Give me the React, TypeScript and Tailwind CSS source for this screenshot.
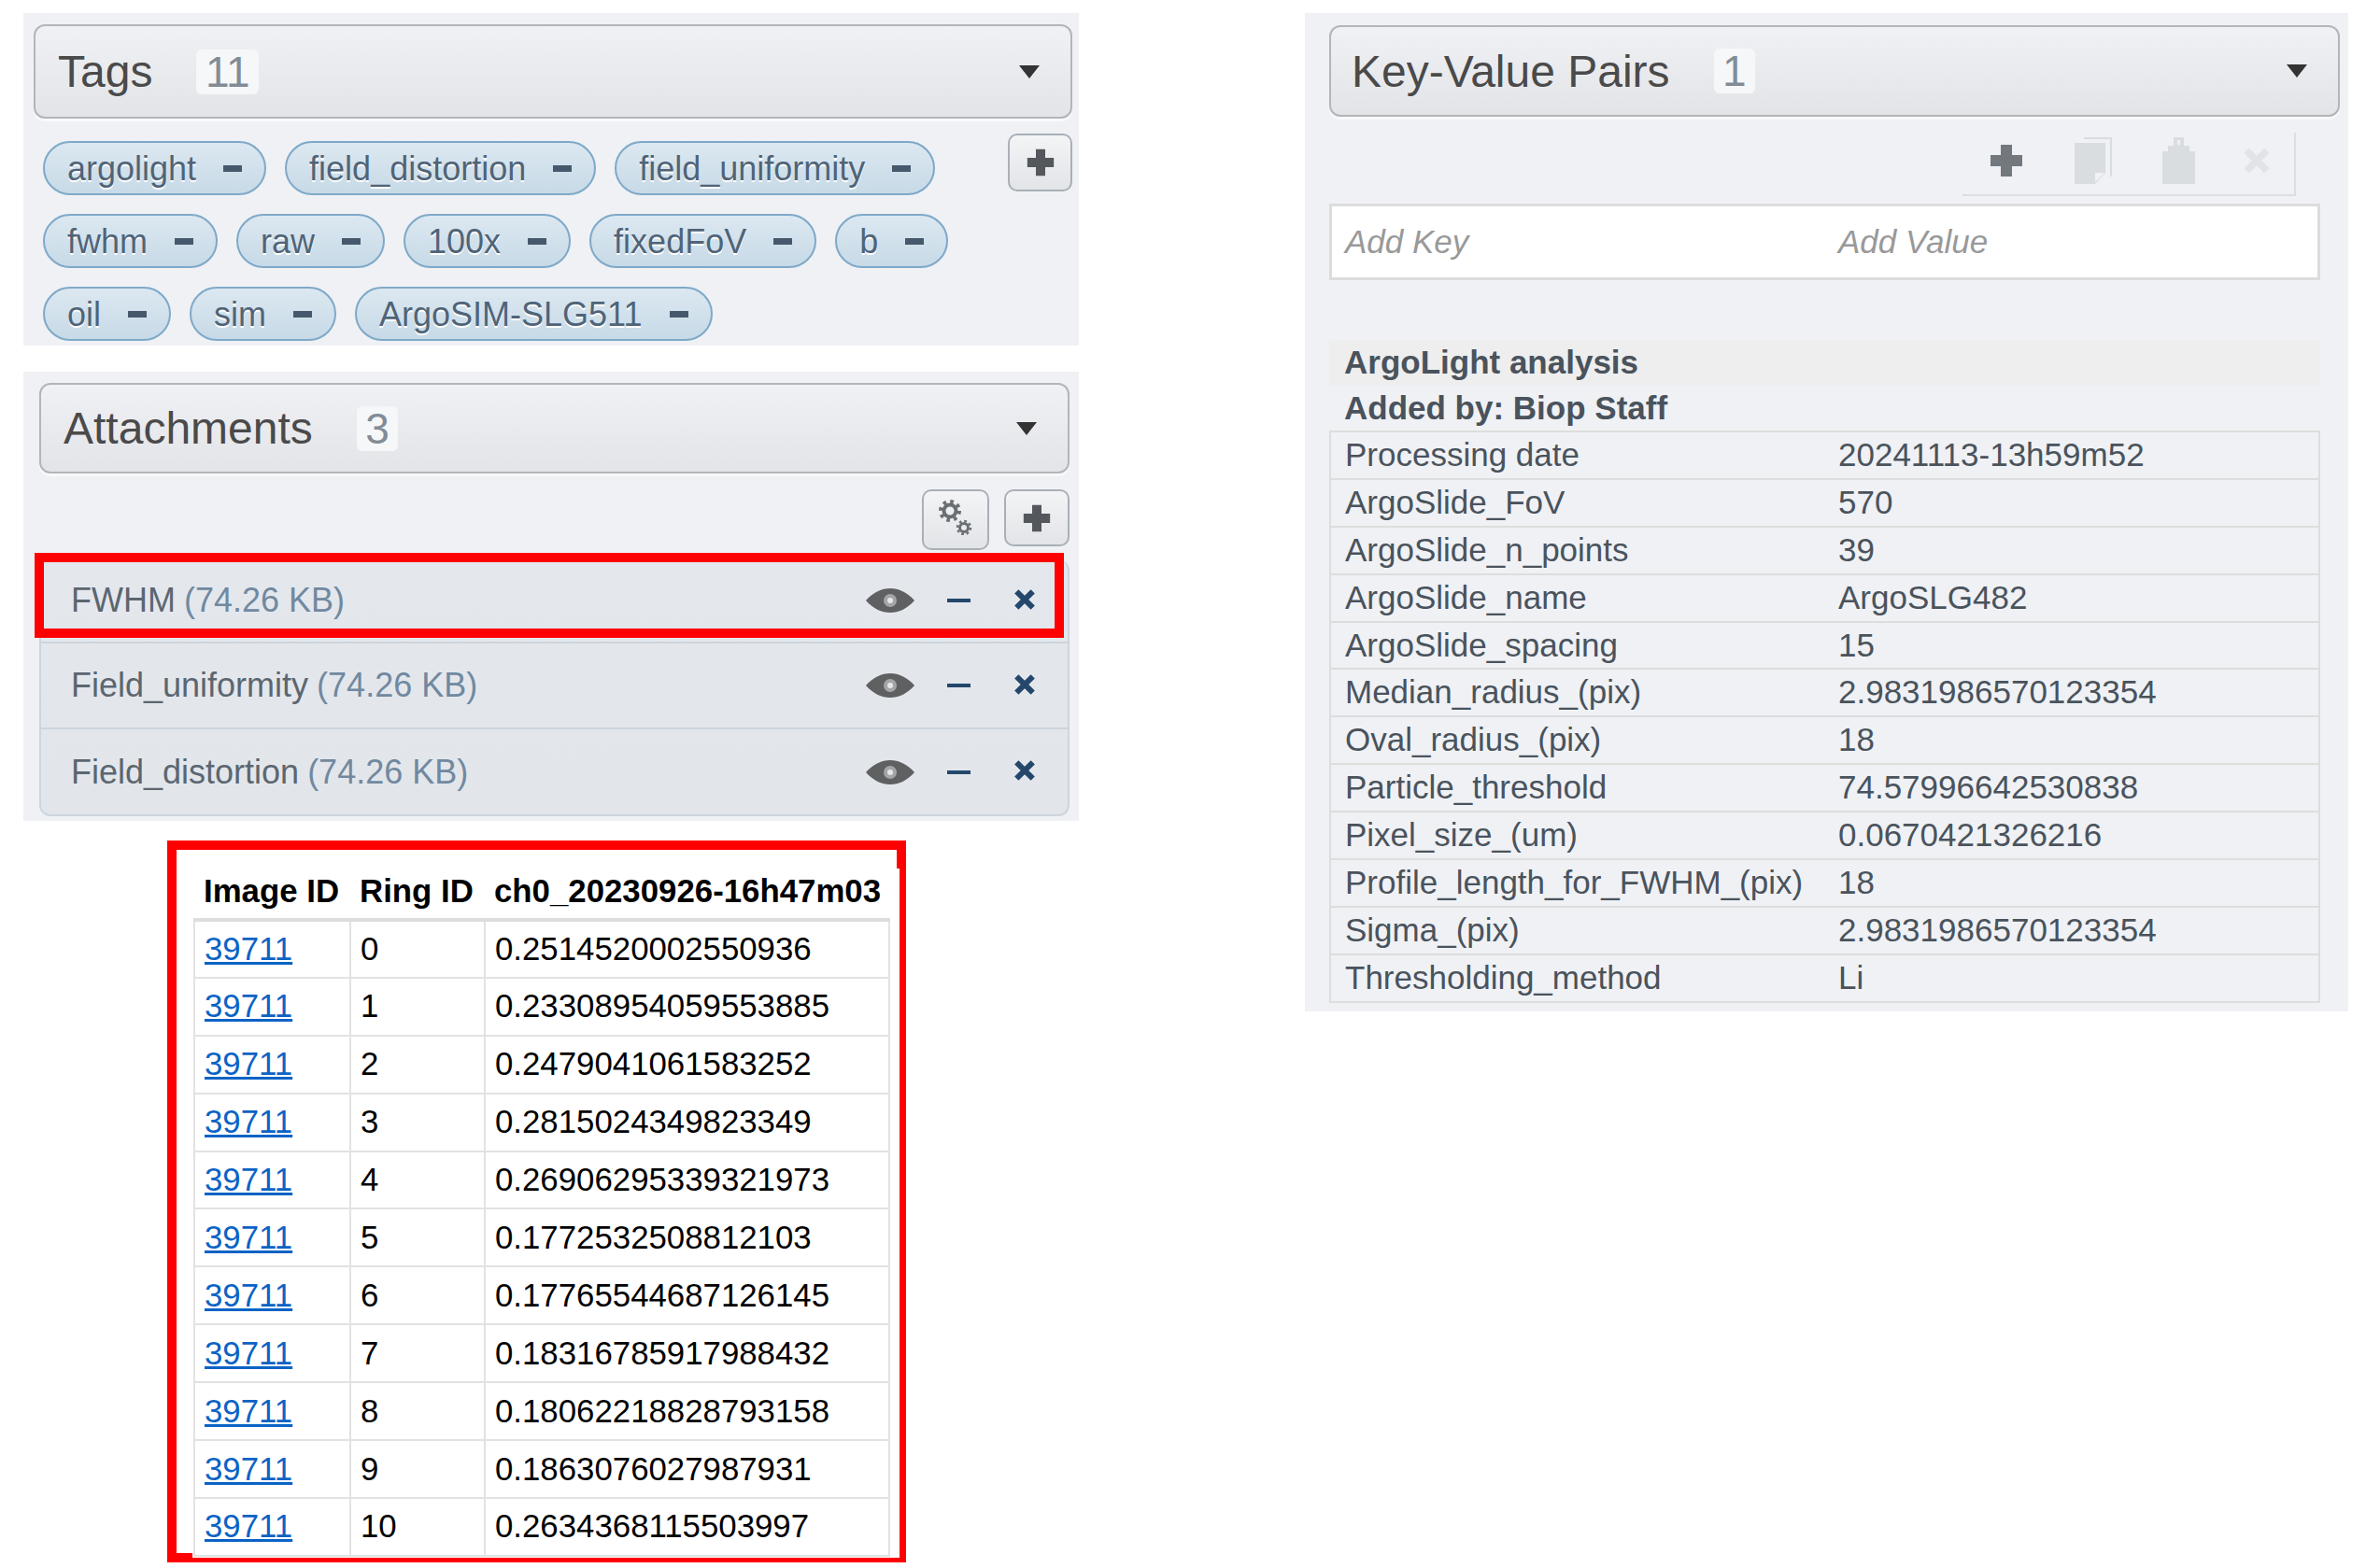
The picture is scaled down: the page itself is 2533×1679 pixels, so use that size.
import React from "react";

const tagRows = [
	"argolight",
	"field_distortion",
	"field_uniformity",
	"fwhm",
	"raw",
	"100x",
	"fixedFoV",
	"b",
	"oil",
	"sim",
	"ArgoSIM-SLG511",
];

const attachments = [
	{ name: "FWHM", height: "h-[90px]", outlined: true },
	{ name: "Field_uniformity", height: "h-[92px]", outlined: false },
	{ name: "Field_distortion", height: "h-[91px]", outlined: false },
];

const ringValues = [
	"0.2514520002550936",
	"0.23308954059553885",
	"0.2479041061583252",
	"0.2815024349823349",
	"0.26906295339321973",
	"0.1772532508812103",
	"0.17765544687126145",
	"0.18316785917988432",
	"0.18062218828793158",
	"0.1863076027987931",
	"0.2634368115503997",
];

const keyValues = [
	["Processing date", "20241113-13h59m52"],
	["ArgoSlide_FoV", "570"],
	["ArgoSlide_n_points", "39"],
	["ArgoSlide_name", "ArgoSLG482"],
	["ArgoSlide_spacing", "15"],
	["Median_radius_(pix)", "2.9831986570123354"],
	["Oval_radius_(pix)", "18"],
	["Particle_threshold", "74.57996642530838"],
	["Pixel_size_(um)", "0.0670421326216"],
	["Profile_length_for_FWHM_(pix)", "18"],
	["Sigma_(pix)", "2.9831986570123354"],
	["Thresholding_method", "Li"],
];

const PlusIcon: React.FC<{ className?: string }> = ({ className }) => (
	<svg viewBox="0 0 36 36" className={className} fill="currentColor">
		<path d="M12 1h12v11h11v12H24v11H12V24H1V12h11z" />
	</svg>
);

const GearsIcon = () => (
	<svg viewBox="0 0 36 38" className="h-[38px] w-[36px] text-[#6a6f73]" fill="none" stroke="currentColor">
		<circle cx="12" cy="12" r="6.5" strokeWidth="4" />
		<circle cx="12" cy="12" r="10" strokeWidth="4" strokeDasharray="3.6 4.25" />
		<circle cx="27" cy="30" r="4.5" strokeWidth="3" />
		<circle cx="27" cy="30" r="7" strokeWidth="2.5" strokeDasharray="2.7 2.8" />
	</svg>
);

const EyeIcon = () => (
	<svg viewBox="0 0 52 26" className="h-[26px] w-[52px] text-[#5f6062]">
		<path
			fill="currentColor"
			d="M0 13C8 4 17 0 26 0s18 4 26 13c-8 9-17 13-26 13S8 22 0 13z"
		/>
		<circle cx="26" cy="13" r="7" fill="#a3a5a7" />
		<circle cx="26" cy="13" r="3" fill="#e4e8ed" />
	</svg>
);

const CrossIcon: React.FC<{ className?: string }> = ({ className }) => (
	<svg viewBox="0 0 22 22" className={className} fill="none" stroke="currentColor" strokeWidth="5.5">
		<path d="M3 3l16 16M19 3L3 19" />
	</svg>
);

const CopyIcon = () => (
	<svg viewBox="0 0 40 50" className="h-[50px] w-[40px] text-[#dadde0]">
		<path fill="currentColor" d="M0 6h33v32L22 50H0z" />
		<path fill="#eff1f5" d="M22 48V38h10z" />
		<path fill="none" stroke="currentColor" strokeWidth="2" d="M10 1h29v41" />
	</svg>
);

const PasteIcon = () => (
	<svg viewBox="0 0 35 50" className="h-[50px] w-[35px] text-[#dadde0]">
		<path
			fillRule="evenodd"
			fill="currentColor"
			d="M12 0h11v9h6v6h6v35H0V15h6V9h6zm4 3v5h3V3z"
		/>
		<path fill="#eff1f5" d="M0 10h6v3H0zM29 10h6v3h-6z" />
	</svg>
);

const Caret = () => (
	<div className="h-0 w-0 border-x-[11px] border-t-[14px] border-x-transparent border-t-[#333333]" />
);

const SectionHeader: React.FC<{
	title: string;
	count: string;
	className: string;
}> = ({ title, count, className }) => (
	<div
		className={`flex items-center rounded-[12px] border-2 border-[#b3b5b8] bg-gradient-to-b from-[#f0f1f5] to-[#e3e4e8] shadow-[0_3px_0_#f8f9fb] ${className}`}
	>
		<span className="pt-[1px] text-[48px] leading-none text-[#4a4a4a]">{title}</span>
		<span className="ml-[47px] flex h-[48px] items-center rounded-[6px] bg-[#f6f7f9] px-[9.5px] text-[46px] leading-none text-[#828c96]">
			{count}
		</span>
		<div className="ml-auto mr-[33px]">
			<Caret />
		</div>
	</div>
);

const Chip: React.FC<{ label: string }> = ({ label }) => (
	<div className="flex h-[58px] items-center rounded-full border-2 border-[#7fa9c8] bg-gradient-to-b from-[#dce8f1] to-[#c7dae7] pl-[24px] pr-[24px] text-[36px] leading-none text-[#4f6478] [text-shadow:0_2px_0_#ffffff]">
		<span className="pt-[2px]">{label}</span>
		<span className="ml-[29px] h-[7px] w-[20px] bg-[#46596c]" />
	</div>
);

const SquareButton: React.FC<{
	className: string;
	children: React.ReactNode;
}> = ({ className, children }) => (
	<div
		className={`flex items-center justify-center rounded-[10px] border-2 border-[#a9b0b7] bg-gradient-to-b from-[#f3f4f6] to-[#e2e4e7] ${className}`}
	>
		{children}
	</div>
);

const AttachmentRow: React.FC<{
	name: string;
	height: string;
	outlined: boolean;
}> = ({ name, height, outlined }) => (
	<div className={`relative flex items-center pl-[32px] pr-[34px] text-[36px] ${height}`}>
		{outlined && (
			<div className="absolute -left-[7px] -top-[7px] h-[91px] w-[1102px] border-[10px] border-[#ff0000]" />
		)}
		<span className="text-[#5c6670]">{name}</span>
		<span className="ml-[9px] text-[#7189a0]">(74.26 KB)</span>
		<div className="ml-auto flex items-center">
			<EyeIcon />
			<span className="ml-[35px] h-[4px] w-[25px] bg-[#24476b]" />
			<CrossIcon className="-mt-[3px] ml-[46px] h-[24px] w-[24px] text-[#24476b]" />
		</div>
	</div>
);

const App: React.FC = () => (
	<div className="flex min-h-[1679px] w-[2533px] bg-white pl-[25px] pt-[14px] font-['Liberation_Sans',Arial,sans-serif]">
		<div className="flex w-[1130px] flex-col">
			{/* tags */}
			<section className="h-[356px] bg-[#eff1f5] pl-[11px] pr-[7px] pt-[12px]">
				<SectionHeader title="Tags" count="11" className="h-[101px] pl-[24px]" />
				<div className="mt-[16px] flex items-start justify-between">
					<div className="ml-[10px] mt-[8px] flex w-[1014px] flex-wrap gap-x-[20px] gap-y-[20px]">
						{tagRows.map((tag) => (
							<Chip key={tag} label={tag} />
						))}
					</div>
					<SquareButton className="h-[62px] w-[69px]">
						<PlusIcon className="h-[30px] w-[30px] text-[#54585c]" />
					</SquareButton>
				</div>
			</section>

			{/* attachments */}
			<section className="mt-[28px] h-[481px] bg-[#eff1f5] pl-[17px] pr-[10px] pt-[12px]">
				<SectionHeader title="Attachments" count="3" className="h-[97px] pl-[24px]" />
				<div className="mt-[17px] flex items-start justify-end gap-[16px]">
					<SquareButton className="h-[65px] w-[72px] pb-[6px]">
						<GearsIcon />
					</SquareButton>
					<SquareButton className="h-[61px] w-[70px]">
						<PlusIcon className="h-[30px] w-[30px] text-[#54585c]" />
					</SquareButton>
				</div>
				<div className="mt-[10px] divide-y-2 divide-[#cdd5de] rounded-[12px] border-x-2 border-b-2 border-[#cdd5de] bg-gradient-to-b from-[#e4e8ed] to-[#e2e6eb]">
					{attachments.map((file) => (
						<AttachmentRow key={file.name} {...file} />
					))}
				</div>
			</section>

			{/* results table */}
			<div className="relative ml-[154px] mt-[21px] h-[773px] w-[791px] border-x-[10px] border-b-[5px] border-t-[10px] border-[#ff0000] pl-[18px] pt-[17px] text-[34.8px] leading-none text-black">
				<div className="absolute bottom-0 left-0 h-[5px] w-[17px] bg-[#ff0000]" />
				<div className="absolute -right-[3px] bottom-0 top-[20px] w-[3px] bg-white" />
				<table className="w-[746px] table-fixed border-collapse">
					<thead>
						<tr className="h-[58px] border-b-[4px] border-[#dddddd] text-left font-bold">
							<th className="w-[167px] pb-[2px] pl-[10px] font-bold">Image ID</th>
							<th className="w-[144px] pb-[2px] pl-[10px] font-bold">Ring ID</th>
							<th className="whitespace-nowrap pb-[2px] pl-[10px] font-bold">ch0_20230926-16h47m03</th>
						</tr>
					</thead>
					<tbody>
						{ringValues.map((value, ring) => (
							<tr key={ring} className="h-[61.9px] border-2 border-[#e2e2e2]">
								<td className="border-r-2 border-[#e2e2e2] pl-[10px]">
									<a href="#" className="text-[#0b63c5] underline">
										39711
									</a>
								</td>
								<td className="border-r-2 border-[#e2e2e2] pl-[10px]">{ring}</td>
								<td className="pl-[10px]">{value}</td>
							</tr>
						))}
					</tbody>
				</table>
			</div>
		</div>

		{/* key-value pairs */}
		<section className="ml-[242px] h-[1069px] w-[1117px] bg-[#eff1f5] pl-[26px] pr-[9px] pt-[13px] text-[35px] leading-none text-[#4a535c]">
			<SectionHeader title="Key-Value Pairs" count="1" className="h-[98px] pl-[22px]" />
			<div className="pr-[21px]">
				<div className="mr-[26px] mt-[17px] flex h-[68px] justify-end">
					<div className="flex h-[68px] w-[357px] items-center border-b-2 border-r-2 border-[#dcdee1] pb-[6px] pl-[29px]">
						<PlusIcon className="h-[36px] w-[36px] text-[#73787e]" />
						<div className="ml-[55px]">
							<CopyIcon />
						</div>
						<div className="ml-[54px]">
							<PasteIcon />
						</div>
						<CrossIcon className="ml-[51px] h-[30px] w-[30px] text-[#e1e3e6]" />
					</div>
				</div>
				<div className="mt-[8px] flex h-[82px] items-center border-[3px] border-[#dcdcdc] bg-white pb-[2px] pl-[14px] italic text-[#999999]">
					<span className="w-[528px]">Add Key</span>
					<span>Add Value</span>
				</div>
				<div className="mt-[64px] flex h-[49px] items-center bg-[#eeeeee] pb-[2px] pl-[16px] font-bold">
					ArgoLight analysis
				</div>
				<div className="flex h-[48px] items-center pb-[2px] pl-[16px] font-bold">Added by: Biop Staff</div>
				<div className="border-2 border-b-0 border-[#dddddd]">
					{keyValues.map(([key, value]) => (
						<div key={key} className="flex h-[50.9px] items-center border-b-2 border-[#dddddd] pb-[2px] pl-[15px]">
							<span className="w-[528px] shrink-0 whitespace-nowrap">{key}</span>
							<span>{value}</span>
						</div>
					))}
				</div>
			</div>
		</section>
	</div>
);

export default App;
